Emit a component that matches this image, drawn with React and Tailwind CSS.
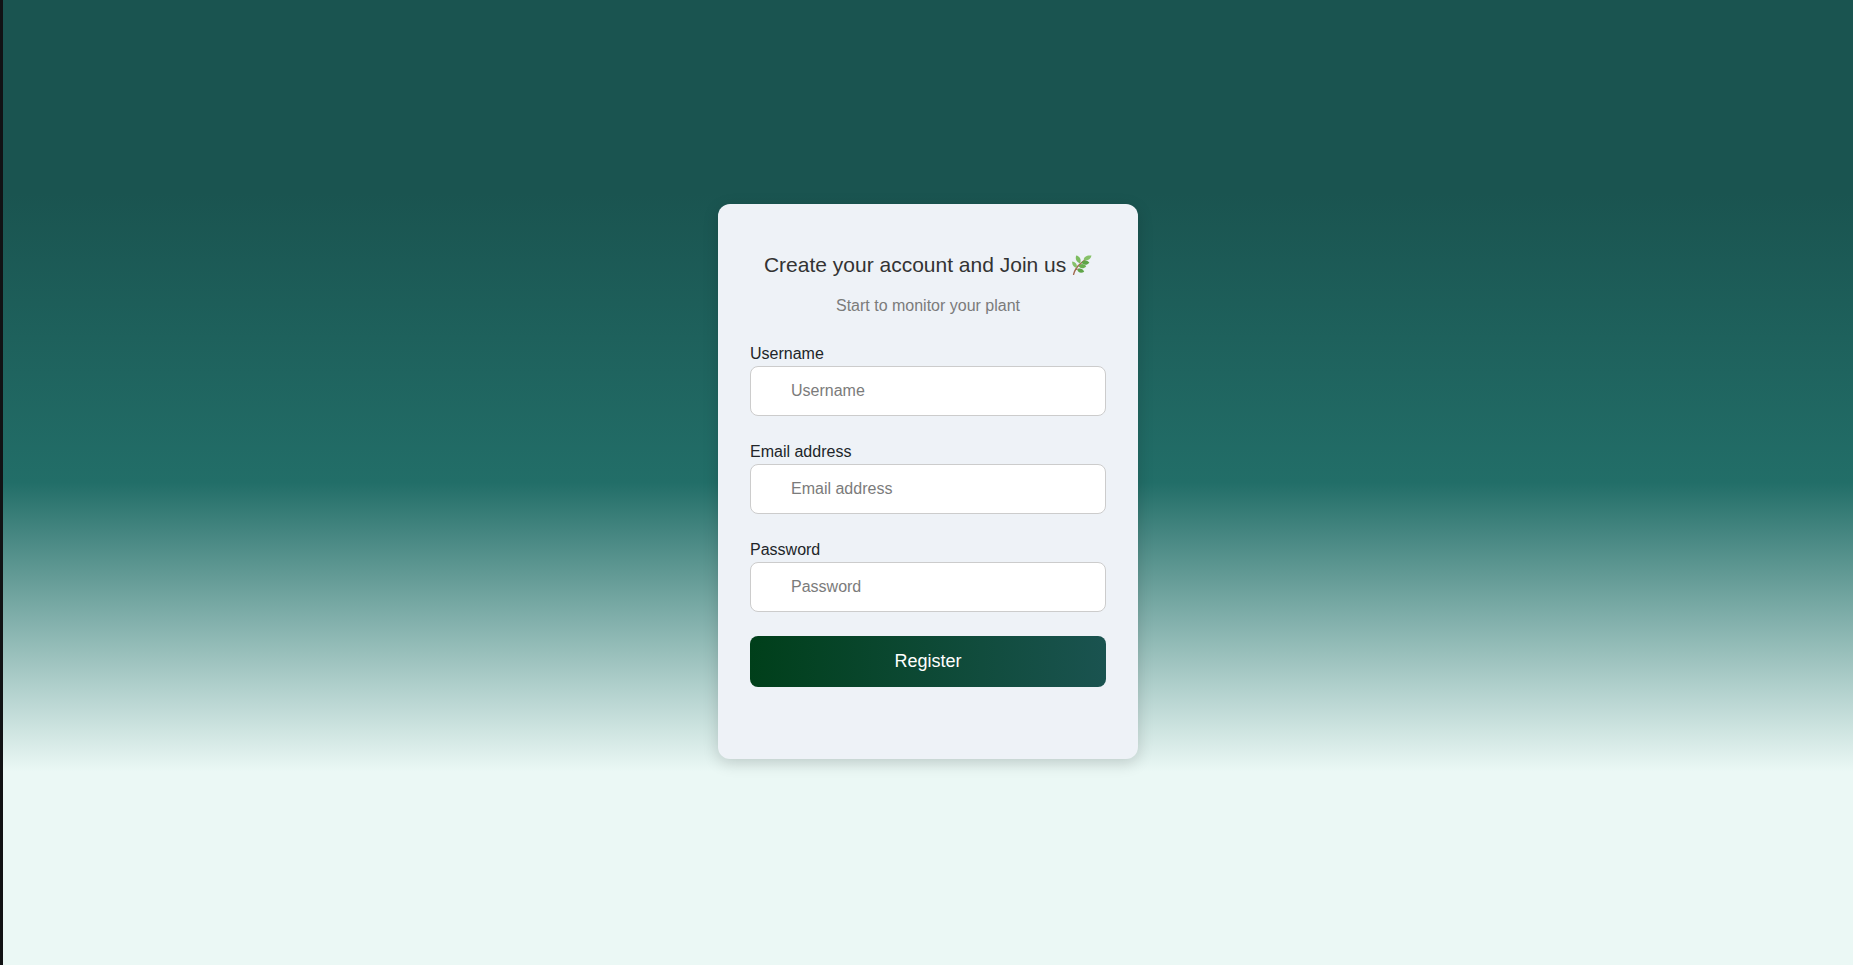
const fields = [
  { id: "username", label: "Username", type: "text", autoComplete: "username" },
  { id: "email", label: "Email address", type: "email", autoComplete: "email" },
  { id: "password", label: "Password", type: "password", autoComplete: "new-password" },
];

function Sprig() {
  return (
    <svg viewBox="0 0 20 20" className="inline-block size-5 align-[-3px]" role="img" aria-label="Herb">
      <path d="M1.6 19.4C2.6 15 5 11.6 8.6 8.6C11 6.4 13.4 4.4 16 3" fill="none" stroke="#a1694f" strokeWidth="1.4" strokeLinecap="round" />
      <path d="M4 14.6C6 13.8 7.4 14 9 14.8" fill="none" stroke="#a1694f" strokeWidth="0.9" />
      <path d="M11.8 5.2C11.4 1.8 15 -0.2 19.5 0.6C18.8 4.4 15.8 6.4 11.8 5.2Z" fill="#86c169" />
      <path d="M8 8.2C4.4 7 3 3.8 4.2 0.4C7.6 1 9.8 4.4 8 8.2Z" fill="#7cbc5f" />
      <path d="M4.6 12.8C1.8 12.6 -0.2 10 0.2 6.4C3.6 6.8 5.8 9.6 4.6 12.8Z" fill="#86c169" />
      <path d="M9.4 7.6C11.4 4.6 15 4.8 17.4 7.4C15.2 10.4 11.6 10.6 9.4 7.6Z" fill="#5fa548" />
      <path d="M6.4 11.1C8.4 8.2 12 8.4 14.2 11.2C12 14 8.6 14 6.4 11.1Z" fill="#6bb050" />
      <path d="M5.2 14.8C7.2 12.6 10.6 13.4 12.2 16.8C9.4 18.6 6.2 18 5.2 14.8Z" fill="#5fa548" />
    </svg>
  );
}

function Field({ id, label, type, autoComplete }) {
  return (
    <div className="flex flex-col">
      <label htmlFor={id} className="text-base text-[#212529]">
        {label}
      </label>
      <input
        id={id}
        name={id}
        type={type}
        autoComplete={autoComplete}
        placeholder={label}
        className="w-full rounded-lg border border-[#cccccc] bg-white py-3 pr-3 pl-10 text-base text-[#212529] placeholder:text-[#7b7b7b]"
      />
    </div>
  );
}

export default function App() {
  return (
    <main className="flex min-h-screen items-center justify-center border-l-3 border-[#111214] bg-[linear-gradient(to_bottom,#1a5450_20%,#226e68_50%,#ebf8f5_80%)] font-['Liberation_Sans',Arial,sans-serif]">
      <form
        onSubmit={(event) => event.preventDefault()}
        className="mb-0.5 w-full max-w-[420px] rounded-xl bg-[#eef2f7] px-8 pt-12 pb-18 shadow-[0_4px_16px_rgba(0,0,0,0.16)]"
      >
        <h1 className="text-center text-[21px] leading-[26px] text-[#333333]">
          Create your account and Join us <Sprig />
        </h1>
        <p className="mt-4 text-center text-base text-[#7b7b7b]">Start to monitor your plant</p>
        <div className="mt-6 flex flex-col gap-6">
          {fields.map((field) => (
            <Field key={field.id} {...field} />
          ))}
          <button
            type="submit"
            className="w-full rounded-lg bg-linear-to-r/srgb from-[#003f1a] to-[#1a5350] py-3 text-lg leading-[27px] text-white"
          >
            Register
          </button>
        </div>
      </form>
    </main>
  );
}
